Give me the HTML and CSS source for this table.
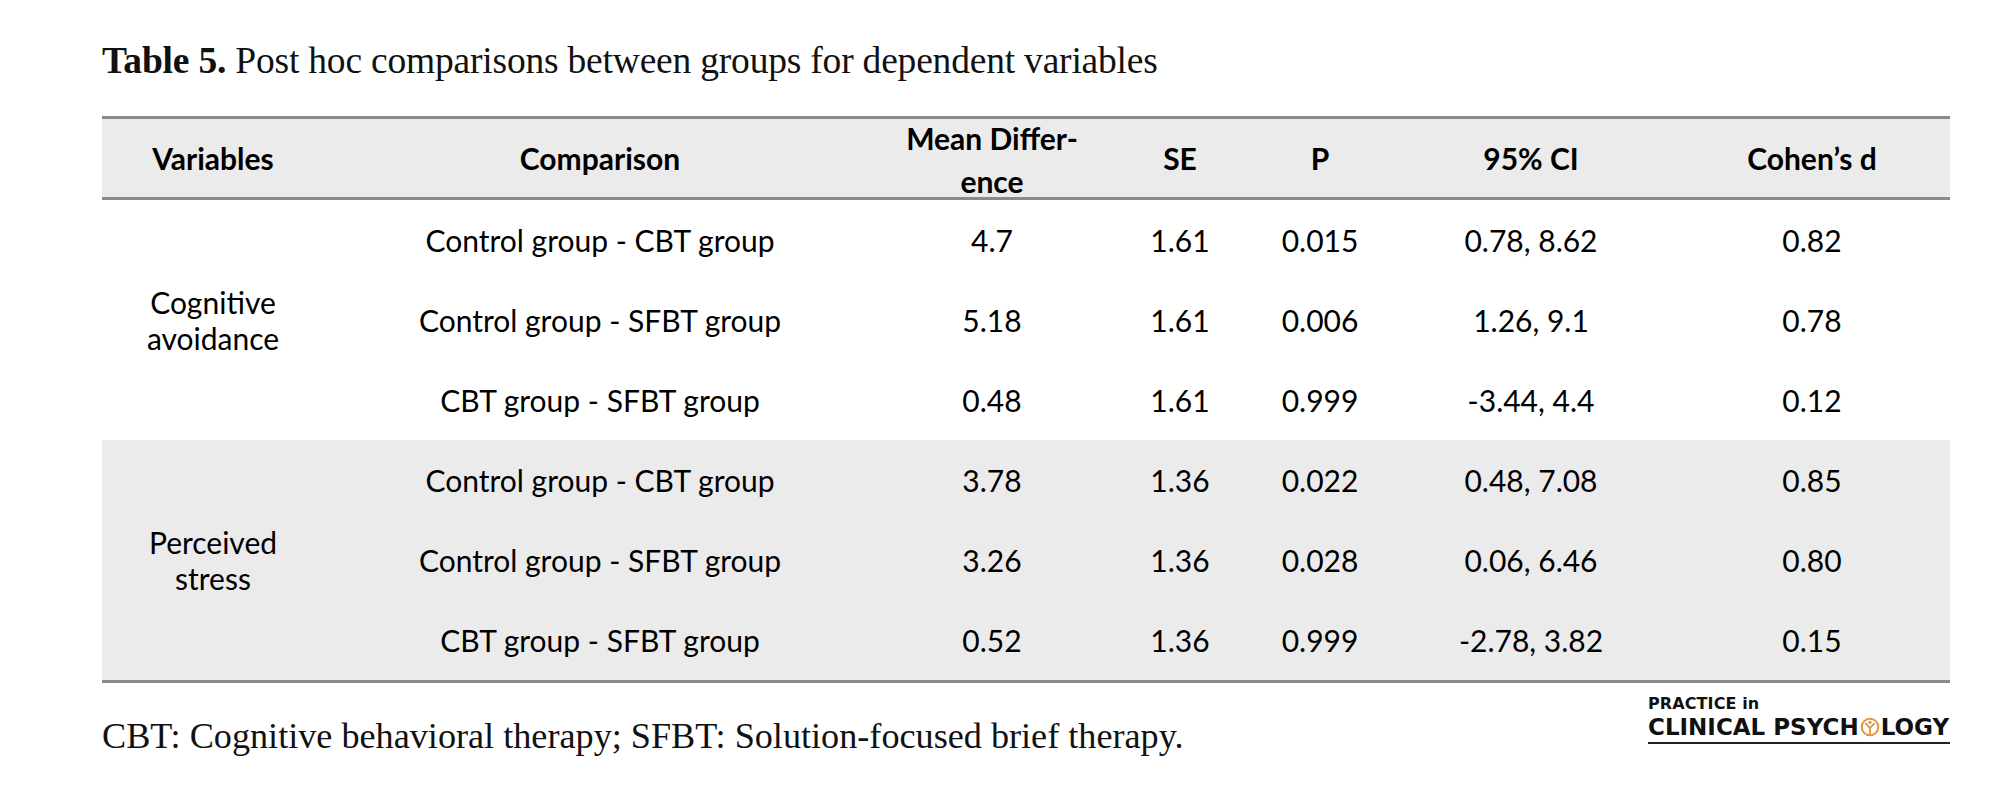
FILE: index.html
```html
<!DOCTYPE html>
<html>
<head>
<meta charset="utf-8">
<link rel="stylesheet" href="styles.css">
</head>
<body>
<div class="page">
  <h1 class="title"><b>Table 5.</b> Post hoc comparisons between groups for dependent variables</h1>
  <table class="data">
    <colgroup>
      <col class="c1"><col class="c2"><col class="c3"><col class="c4"><col class="c5"><col class="c6"><col class="c7">
    </colgroup>
    <thead>
      <tr>
        <th>Variables</th>
        <th>Comparison</th>
        <th><div class="wrap">Mean Differ-<br>ence</div></th>
        <th>SE</th>
        <th>P</th>
        <th>95% CI</th>
        <th>Cohen’s d</th>
      </tr>
    </thead>
    <tbody class="grp">
      <tr>
        <td rowspan="3" class="var">Cognitive<br>avoidance</td>
        <td>Control group - CBT group</td><td>4.7</td><td>1.61</td><td>0.015</td><td>0.78, 8.62</td><td>0.82</td>
      </tr>
      <tr>
        <td>Control group - SFBT group</td><td>5.18</td><td>1.61</td><td>0.006</td><td>1.26, 9.1</td><td>0.78</td>
      </tr>
      <tr>
        <td>CBT group - SFBT group</td><td>0.48</td><td>1.61</td><td>0.999</td><td>-3.44, 4.4</td><td>0.12</td>
      </tr>
    </tbody>
    <tbody class="grp shaded">
      <tr>
        <td rowspan="3" class="var">Perceived<br>stress</td>
        <td>Control group - CBT group</td><td>3.78</td><td>1.36</td><td>0.022</td><td>0.48, 7.08</td><td>0.85</td>
      </tr>
      <tr>
        <td>Control group - SFBT group</td><td>3.26</td><td>1.36</td><td>0.028</td><td>0.06, 6.46</td><td>0.80</td>
      </tr>
      <tr>
        <td>CBT group - SFBT group</td><td>0.52</td><td>1.36</td><td>0.999</td><td>-2.78, 3.82</td><td>0.15</td>
      </tr>
    </tbody>
  </table>
  <div class="foot">
    <p class="note">CBT: Cognitive behavioral therapy; SFBT: Solution-focused brief therapy.</p>
    <div class="logo">
      <div class="logo-top">PRACTICE in</div>
      <div class="logo-main">CLINICAL PSYCH<svg class="logo-o" viewBox="0 0 20 20" width="20" height="20"><circle cx="10" cy="10" r="8.3" fill="none" stroke="#e8923c" stroke-width="2"/><circle cx="10" cy="5.4" r="1.6" fill="#e8923c"/><path d="M5.8 6.6 L10 11 L14.2 6.6 M10 11 L10 16.6" fill="none" stroke="#e8923c" stroke-width="1.8" stroke-linecap="round"/></svg>LOGY</div>
    </div>
  </div>
</div>
</body>
</html>
```

FILE: styles.css
```css
html, body {
  margin: 0;
  padding: 0;
  background: #ffffff;
}
.page {
  width: 1848px;
  padding: 0 0 0 102px;
  color: #111111;
}
.title {
  margin: 0;
  padding-top: 39px;
  height: 116px;
  box-sizing: border-box;
  font-family: "Liberation Serif", "Times New Roman", serif;
  font-weight: normal;
  font-size: 37.5px;
  line-height: 44px;
  letter-spacing: -0.2px;
}
.title b {
  font-weight: bold;
}
.data {
  width: 1848px;
  border-collapse: collapse;
  table-layout: fixed;
  font-family: Lato, "Open Sans", sans-serif;
  font-size: 30px;
  color: #000000;
}
.c1 { width: 222px; }
.c2 { width: 552px; }
.c3 { width: 232px; }
.c4 { width: 144px; }
.c5 { width: 136px; }
.c6 { width: 286px; }
.c7 { width: 276px; }
thead tr {
  background: #ebebec;
  border-top: 3px solid #8a8a8a;
  border-bottom: 3px solid #8a8a8a;
  height: 81px;
}
th {
  font-weight: bold;
  text-align: center;
  padding: 0;
  line-height: 36px;
}
.wrap {
  line-height: 43px;
  margin: -2px 0 -6px;
}
td {
  text-align: center;
  padding: 0;
  height: 80px;
  line-height: 36px;
}
.shaded {
  background: #ebebec;
}
.shaded tr:last-child {
  border-bottom: 3px solid #8a8a8a;
}
.foot {
  display: flex;
  justify-content: space-between;
  width: 1848px;
}
.note {
  margin: 0;
  padding-top: 32px;
  font-family: "Liberation Serif", "Times New Roman", serif;
  font-size: 36.2px;
  line-height: 42px;
  color: #111111;
}
.logo {
  padding-top: 12px;
  width: 302px;
  font-family: "DejaVu Sans", sans-serif;
  font-weight: bold;
  color: #111111;
}
.logo-top {
  font-size: 16px;
  line-height: 18px;
  letter-spacing: 0.1px;
}
.logo-main {
  font-size: 23px;
  line-height: 28px;
  border-bottom: 2px solid #222222;
  padding-bottom: 1px;
  display: flex;
  align-items: center;
  white-space: nowrap;
}
.logo-o {
  flex-shrink: 0;
  margin: 0 1px;
}
```
